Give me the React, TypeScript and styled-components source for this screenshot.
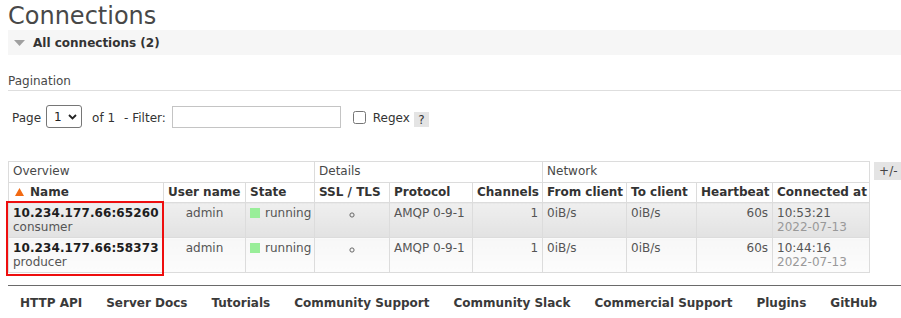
import React from "react";
import styled, { createGlobalStyle } from "styled-components";

const Global = createGlobalStyle`
  html, body { margin: 0; padding: 0; background: #fff; }
  body {
    font-family: "DejaVu Sans", Verdana, sans-serif;
    font-size: 12px;
    color: #484848;
  }
`;

const PageWrap = styled.div`
  padding: 0 0 0 8px;
  width: 893px;
`;

const Title = styled.h1`
  margin: 3px 0 0;
  font-size: 24px;
  font-weight: normal;
  line-height: 27px;
  color: #484848;
`;

const SectionBar = styled.div`
  display: flex;
  align-items: center;
  gap: 8px;
  height: 25px;
  padding-left: 6px;
  background: #f6f6f6;
`;

const SectionTitle = styled.h2`
  margin: 0;
  font-size: 12px;
  line-height: 14px;
  font-weight: bold;
  color: #333;
`;

const SubHeading = styled.h3`
  margin: 19px 0 0;
  font-size: 12px;
  font-weight: normal;
  line-height: 14px;
  padding-bottom: 2px;
  border-bottom: 1px solid #dedede;
  color: #484848;
`;

const Controls = styled.div`
  display: flex;
  align-items: center;
  height: 23px;
  margin-top: 14px;
  padding-left: 4px;
`;

const Label = styled.span<{ $ml?: number }>`
  margin-left: ${(p) => p.$ml ?? 0}px;
  padding-top: 3px;
  line-height: 14px;
  color: #333;
`;

const SelectBox = styled.div<{ $ml?: number }>`
  margin-left: ${(p) => p.$ml ?? 0}px;
  box-sizing: border-box;
  width: 36px;
  height: 23px;
  border: 1px solid #767676;
  border-radius: 3px;
  display: flex;
  align-items: center;
  padding-left: 7px;
  gap: 6px;
  color: #222;
  background: #fff;
`;

const FilterInput = styled.input<{ $ml?: number }>`
  margin: 0 0 0 ${(p) => p.$ml ?? 0}px;
  box-sizing: border-box;
  width: 169px;
  height: 22px;
  border: 1px solid #c4c4c4;
  padding: 0 4px;
  font: inherit;
  outline: none;
`;

const Check = styled.input<{ $ml?: number }>`
  margin: 2px 0 0 ${(p) => p.$ml ?? 0}px;
  width: 13px;
  height: 13px;
`;

const HelpBox = styled.span<{ $ml?: number }>`
  margin: 6px 0 0 ${(p) => p.$ml ?? 0}px;
  width: 15px;
  height: 15px;
  background: #e4e4e4;
  color: #333;
  display: flex;
  align-items: center;
  justify-content: center;
  line-height: 14px;
`;

const TableRow = styled.div`
  display: flex;
  align-items: flex-start;
  gap: 4px;
  margin-top: 33px;
`;

const TableWrap = styled.div`
  position: relative;
`;

const Table = styled.table`
  border-collapse: collapse;
  table-layout: fixed;
  width: 861px;
  border: 1px solid #dcdcdc;
`;

const GroupTh = styled.th`
  text-align: left;
  font-weight: normal;
  color: #484848;
  line-height: 14px;
  padding: 2px 4px 4px;
  border: 1px solid #dcdcdc;
  background: #fff;
`;

const ColTh = styled.th`
  text-align: left;
  font-weight: bold;
  color: #333;
  line-height: 14px;
  padding: 2px 4px 3px;
  border: 1px solid #dcdcdc;
  background: #fff;
  white-space: nowrap;
`;

const DataRow = styled.tr<{ $alt: 1 | 2 }>`
  td {
    background: ${(p) =>
      p.$alt === 1
        ? "linear-gradient(to bottom, #efefef, #e2e2e2)"
        : "linear-gradient(to bottom, #f7f7f7, #fcfcfc)"};
  }
`;

const Td = styled.td<{ $align?: "left" | "center" | "right" }>`
  text-align: ${(p) => p.$align ?? "left"};
  vertical-align: top;
  line-height: 14px;
  padding: 3px 4px;
  border: 1px solid #dcdcdc;
  color: #555;
  white-space: nowrap;
`;

const ConnName = styled.div`
  font-weight: bold;
  color: #1e1e1e;
  letter-spacing: 0.1px;
`;

const Muted = styled.div`
  color: #999;
`;

const StateBadge = styled.span`
  display: inline-block;
  width: 10px;
  height: 10px;
  background: #99ee99;
  margin-right: 5px;
  vertical-align: -1px;
`;

const ToggleBtn = styled.span`
  margin-top: 1px;
  height: 18px;
  padding: 0 5px;
  background: #e4e4e4;
  color: #444;
  line-height: 18px;
`;

const Highlight = styled.div`
  position: absolute;
  left: -2px;
  top: 40px;
  width: 158px;
  height: 75px;
  box-sizing: border-box;
  border: 2px solid #ee0e0e;
  pointer-events: none;
`;

const Footer = styled.ul`
  list-style: none;
  margin: 12px 0 0;
  padding: 10px 0 0 12px;
  border-top: 1px solid #6a6a6a;
  display: flex;
  gap: 24px;
  white-space: nowrap;
`;

const FooterItem = styled.li`
  font-weight: bold;
  line-height: 14px;
  color: #3a3a3a;
`;

const DownTriangle = () => (
  <svg width="11" height="6" viewBox="0 0 11 6">
    <polygon points="0,0 11,0 5.5,6" fill="#a0a0a0" />
  </svg>
);

const SortUp = () => (
  <svg width="9" height="8" viewBox="0 0 9 8" style={{ marginRight: 6, marginLeft: 2 }}>
    <polygon points="4.5,0 9,8 0,8" fill="#f26a13" />
  </svg>
);

const Chevron = () => (
  <svg width="9" height="6" viewBox="0 0 9 6">
    <polyline points="1,1 4.5,4.5 8,1" fill="none" stroke="#222" strokeWidth="1.8" />
  </svg>
);

const SmallCircle = () => (
  <svg width="6" height="6" viewBox="0 0 6 6" style={{ verticalAlign: -1 }}>
    <circle cx="3" cy="3" r="2.1" fill="none" stroke="#666" strokeWidth="1" />
  </svg>
);

const rows = [
  { name: "10.234.177.66:65260", client: "consumer", time: "10:53:21", alt: 1 as const },
  { name: "10.234.177.66:58373", client: "producer", time: "10:44:16", alt: 2 as const },
];

const cols = [155, 82, 69, 75, 83, 70, 84, 70, 76, 97];

const footerLinks = [
  "HTTP API",
  "Server Docs",
  "Tutorials",
  "Community Support",
  "Community Slack",
  "Commercial Support",
  "Plugins",
  "GitHub",
];

export default function App() {
  return (
    <>
      <Global />
      <PageWrap>
        <Title>Connections</Title>
        <SectionBar>
          <DownTriangle />
          <SectionTitle>All connections (2)</SectionTitle>
        </SectionBar>
        <SubHeading>Pagination</SubHeading>
        <Controls>
          <Label>Page</Label>
          <SelectBox $ml={5}>
            <span>1</span>
            <Chevron />
          </SelectBox>
          <Label $ml={10}>of 1</Label>
          <Label $ml={9}>- Filter:</Label>
          <FilterInput $ml={6} type="text" />
          <Check $ml={12} type="checkbox" />
          <Label $ml={7}>Regex</Label>
          <HelpBox $ml={4}>?</HelpBox>
        </Controls>
        <TableRow>
          <TableWrap>
            <Table>
              <colgroup>
                {cols.map((w, i) => (
                  <col key={i} style={{ width: w }} />
                ))}
              </colgroup>
              <thead>
                <tr>
                  <GroupTh colSpan={3}>Overview</GroupTh>
                  <GroupTh colSpan={3}>Details</GroupTh>
                  <GroupTh colSpan={4}>Network</GroupTh>
                </tr>
                <tr>
                  <ColTh>
                    <SortUp />
                    Name
                  </ColTh>
                  <ColTh>User name</ColTh>
                  <ColTh>State</ColTh>
                  <ColTh>SSL / TLS</ColTh>
                  <ColTh>Protocol</ColTh>
                  <ColTh>Channels</ColTh>
                  <ColTh>From client</ColTh>
                  <ColTh>To client</ColTh>
                  <ColTh>Heartbeat</ColTh>
                  <ColTh>Connected at</ColTh>
                </tr>
              </thead>
              <tbody>
                {rows.map((r) => (
                  <DataRow key={r.name} $alt={r.alt}>
                    <Td>
                      <ConnName>{r.name}</ConnName>
                      <div>{r.client}</div>
                    </Td>
                    <Td $align="center">admin</Td>
                    <Td>
                      <StateBadge />
                      running
                    </Td>
                    <Td $align="center">
                      <SmallCircle />
                    </Td>
                    <Td>AMQP 0-9-1</Td>
                    <Td $align="right">1</Td>
                    <Td>0iB/s</Td>
                    <Td>0iB/s</Td>
                    <Td $align="right">60s</Td>
                    <Td>
                      <div>{r.time}</div>
                      <Muted>2022-07-13</Muted>
                    </Td>
                  </DataRow>
                ))}
              </tbody>
            </Table>
            <Highlight />
          </TableWrap>
          <ToggleBtn>+/-</ToggleBtn>
        </TableRow>
        <Footer>
          {footerLinks.map((l) => (
            <FooterItem key={l}>{l}</FooterItem>
          ))}
        </Footer>
      </PageWrap>
    </>
  );
}
